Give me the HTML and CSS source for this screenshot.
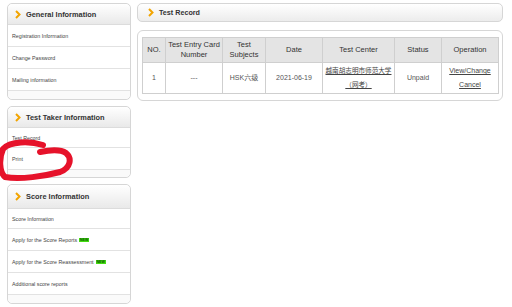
FILE: index.html
```html
<!DOCTYPE html>
<html lang="en">

<head>
    <meta charset="UTF-8">
    <title>Test Record</title>
    <link rel="stylesheet" href="styles.css">
</head>

<body>
    <div class="page">
        <!-- Left Menu -->
        <aside class="sidebar">
            <div class="panel">
                <div class="panel-head"><svg class="chev" viewBox="0 0 6 9"><polyline points="1,1 4.5,4.5 1,8" /></svg>General Information</div>
                <a class="menu-item" href="#">Registration Information</a>
                <a class="menu-item" href="#">Change Password</a>
                <a class="menu-item" href="#">Mailing information</a>
                <div class="panel-foot"></div>
            </div>

            <div class="panel">
                <div class="panel-head"><svg class="chev" viewBox="0 0 6 9"><polyline points="1,1 4.5,4.5 1,8" /></svg>Test Taker Information</div>
                <a class="menu-item short" href="#">Test Record</a>
                <a class="menu-item" href="#">Print</a>
                <div class="panel-foot small"></div>
            </div>

            <div class="panel">
                <div class="panel-head tall"><svg class="chev" viewBox="0 0 6 9"><polyline points="1,1 4.5,4.5 1,8" /></svg>Score Information</div>
                <a class="menu-item short" href="#">Score Information</a>
                <a class="menu-item" href="#">Apply for the Score Reports <span class="new">NEW</span></a>
                <a class="menu-item" href="#">Apply for the Score Reassessment <span class="new">NEW</span></a>
                <a class="menu-item" href="#">Additional score reports</a>
                <div class="panel-foot"></div>
            </div>
        </aside>

        <!-- Main Content -->
        <main class="content">
            <div class="title-bar"><svg class="chev" viewBox="0 0 6 9"><polyline points="1,1 4.5,4.5 1,8" /></svg>Test Record</div>

            <div class="record-box">
                <table class="record">
                    <thead>
                        <tr>
                            <th class="c-no">NO.</th>
                            <th class="c-card">Test Entry Card Number</th>
                            <th class="c-subj">Test Subjects</th>
                            <th class="c-date">Date</th>
                            <th class="c-center">Test Center</th>
                            <th class="c-status">Status</th>
                            <th>Operation</th>
                        </tr>
                    </thead>
                    <tbody>
                        <tr>
                            <td>1</td>
                            <td>---</td>
                            <td>HSK六级</td>
                            <td>2021-06-19</td>
                            <td><a class="cjk" href="#">越南胡志明市师范大学<br>（网考）</a></td>
                            <td>Unpaid</td>
                            <td><a href="#">View/Change</a><br><a href="#">Cancel</a></td>
                        </tr>
                    </tbody>
                </table>
            </div>
        </main>

        <!-- red marker drawn over the Print item -->
        <svg class="scribble" viewBox="0 138 80 45"><path d="M43 145 C30 141 10 141 3 149 C-1 158 -1 172 5 177 C20 180 45 176 60 172 C71 168 72 158 66 153 C60 149 50 150 40 152" /></svg>
    </div>
</body>

</html>
```

FILE: styles.css
```css
/* General Reset */
* {
    margin: 0;
    padding: 0;
    box-sizing: border-box;
}

body {
    background: #fff;
    font-family: 'Liberation Sans', Arial, 'Noto Sans CJK SC', sans-serif;
    color: #444;
}

.page {
    position: relative;
    display: flex;
    align-items: flex-start;
    gap: 6px;
    padding: 3px 9px 0 7px;
}

/* Sidebar */
.sidebar {
    width: 124px;
    flex-shrink: 0;
    display: flex;
    flex-direction: column;
    gap: 6px;
}

.panel {
    border: 1px solid #d6d6d6;
    border-radius: 5px;
    background: #fff;
}

.panel-head {
    height: 21px;
    display: flex;
    align-items: center;
    padding-left: 7px;
    font-size: 7.4px;
    font-weight: bold;
    color: #333;
    border-radius: 5px 5px 0 0;
    background: linear-gradient(#ffffff, #e9e9e9);
    border-bottom: 1px solid #dcdcdc;
}

.panel-head.tall {
    height: 24px;
}

.chev {
    width: 6px;
    height: 9px;
    margin-right: 5px;
    fill: none;
    stroke: #f2a400;
    stroke-width: 2;
}

.menu-item {
    display: flex;
    align-items: center;
    height: 22px;
    padding-left: 4px;
    font-size: 5.3px;
    color: #444;
    text-decoration: none;
    border-bottom: 1px solid #e2e2e2;
}

.menu-item.short {
    height: 20px;
}

.new {
    display: inline-block;
    margin-left: 2px;
    padding: 0 1px;
    font-size: 3.5px;
    font-weight: bold;
    line-height: 4px;
    color: #0a5a00;
    background: #44dd11;
}

.panel-foot {
    height: 8px;
    border-radius: 0 0 5px 5px;
    background: #fafafa;
}

.panel-foot.small {
    height: 7px;
}

.scribble {
    position: absolute;
    left: 0;
    top: 138px;
    width: 80px;
    height: 45px;
    overflow: visible;
    fill: none;
    stroke: #e6122a;
    stroke-width: 6;
    stroke-linecap: round;
    stroke-linejoin: round;
}

/* Main */
.content {
    flex: 1;
    display: flex;
    flex-direction: column;
    gap: 8px;
}

.title-bar {
    height: 19px;
    display: flex;
    align-items: center;
    padding-left: 10px;
    font-size: 7.2px;
    font-weight: bold;
    color: #333;
    border: 1px solid #d6d6d6;
    border-radius: 5px;
    background: linear-gradient(#ffffff, #ececec);
}

.record-box {
    border: 1px solid #d6d6d6;
    border-radius: 6px;
    padding: 6px 3px 6px 4px;
}

.record {
    width: 100%;
    border-collapse: collapse;
    font-size: 7px;
    text-align: center;
}

.record th,
.record td {
    border: 1px solid #cfcfcf;
}

.record th {
    height: 25px;
    font-weight: normal;
    font-size: 7.5px;
    line-height: 10px;
    color: #333;
    background: #e4e4e4;
}

.record td {
    height: 31px;
    line-height: 14px;
    color: #555;
}

.record a {
    color: #444;
}

.record .cjk {
    font-size: 6.6px;
}

.c-no { width: 23px; }
.c-card { width: 57px; }
.c-subj { width: 43px; }
.c-date { width: 57px; }
.c-center { width: 72px; }
.c-status { width: 47px; }
```
